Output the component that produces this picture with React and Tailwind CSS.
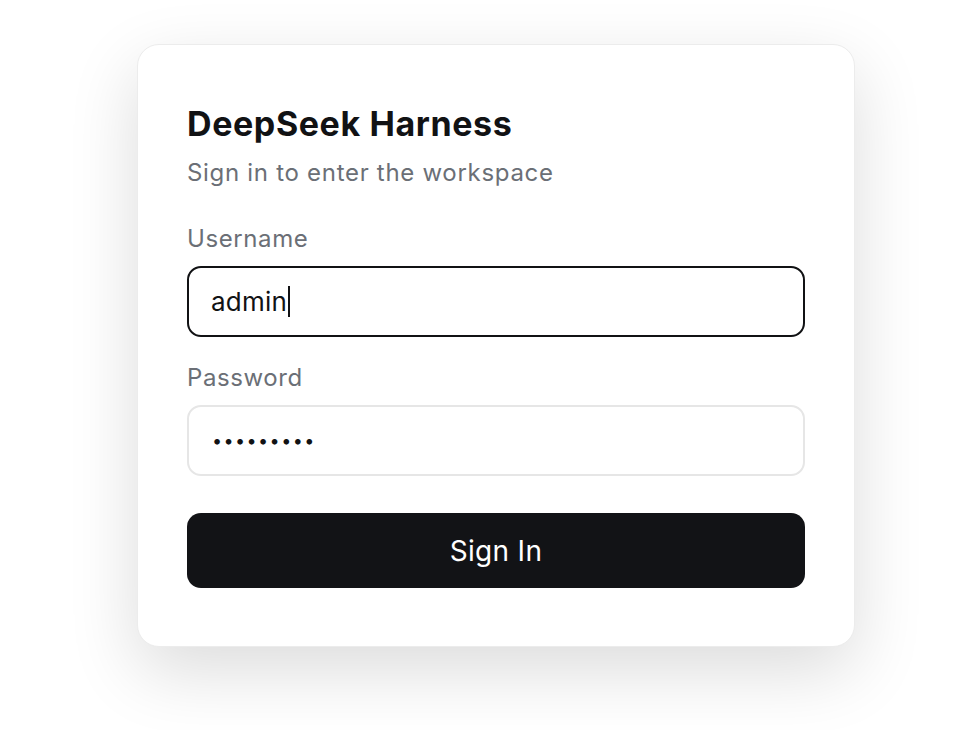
export default function App() {
  return (
    <div className="min-h-[730px] w-full bg-white" style={{ fontFamily: 'Inter, "Noto Sans", sans-serif' }}>
      <div className="pt-[44px] pl-[137px]">
        <div className="w-[718px] rounded-[22px] border border-[#ececec] bg-white px-[49px] pt-[58px] pb-[58px] shadow-[0_24px_70px_rgba(0,0,0,0.14)]">
          <h1 className="text-[34px] leading-[42px] font-bold text-[#111214] tracking-[0.6px]">DeepSeek Harness</h1>
          <p className="mt-[12px] text-[24px] leading-[32px] text-[#6b6f76] tracking-[0.7px]">Sign in to enter the workspace</p>
          <div className="mt-[34px] text-[24px] leading-[32px] text-[#6b6f76] tracking-[0.6px]">Username</div>
          <div className="mt-[11px] flex h-[71px] items-center rounded-[14px] border-2 border-[#111214] px-[22px]">
            <span className="text-[26px] text-[#111214] tracking-[0.2px]">admin</span>
            <span className="ml-[1px] h-[31px] w-[2px] bg-[#111214]"></span>
          </div>
          <div className="mt-[25px] text-[24px] leading-[32px] text-[#6b6f76] tracking-[0.6px]">Password</div>
          <div className="mt-[11px] flex h-[71px] items-center rounded-[14px] border-2 border-[#e6e6e6] px-[23px]">
            <span className="text-[18px] tracking-[1.4px] text-[#111214]">•••••••••</span>
          </div>
          <button className="mt-[37px] flex h-[75px] w-full items-center justify-center rounded-[14px] bg-[#121316] text-[28px] text-white tracking-[0.3px]">
            Sign In
          </button>
        </div>
      </div>
    </div>
  );
}
